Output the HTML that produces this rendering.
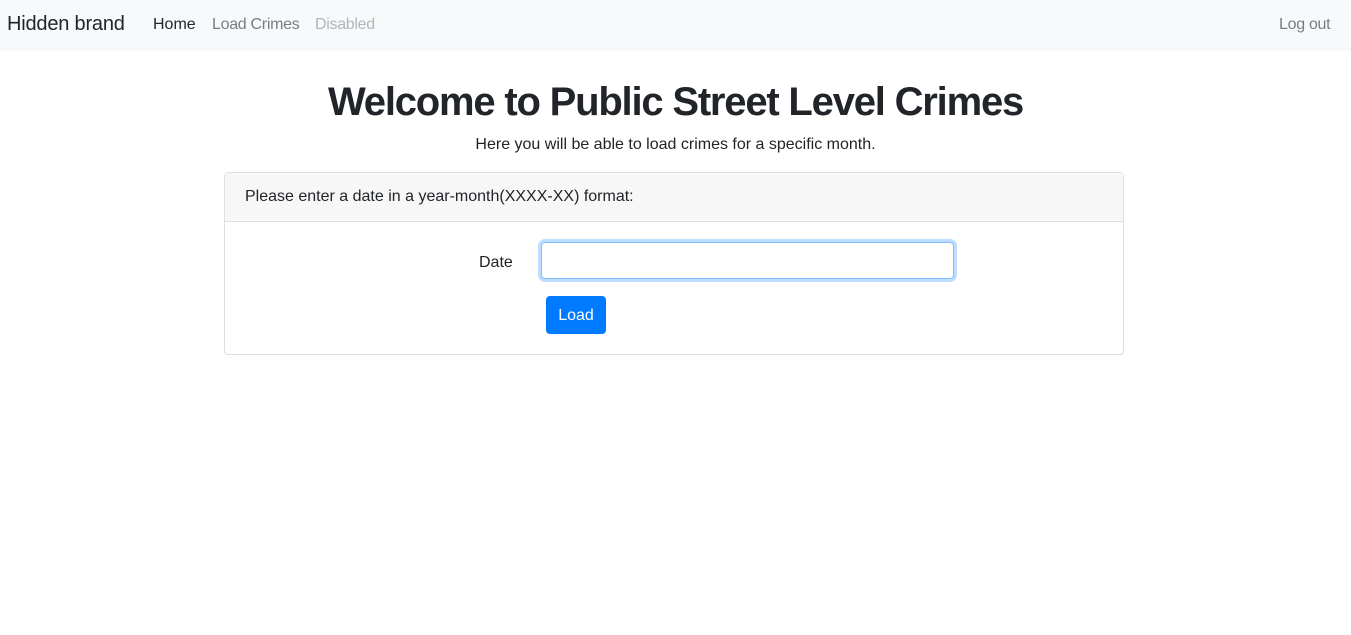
<!DOCTYPE html>
<html><head><meta charset="utf-8"><style>
body{margin:0;font-family:"Liberation Sans",sans-serif;color:#212529;background:#fff;width:1351px;height:635px;overflow:hidden}
nav{height:51px;background:#f8f9fa;position:relative}
nav span{position:absolute;top:16px;font-size:16px}
.brand{left:7px;top:13px!important;font-size:20px!important;color:#212529;letter-spacing:-0.2px}
.nl{letter-spacing:-0.3px}
h1{margin:0;position:absolute;top:80px;width:100%;text-align:center;font-size:40px;font-weight:bold;letter-spacing:-1.2px}
.sub{position:absolute;top:136px;width:100%;text-align:center;font-size:16px}
.card{position:absolute;left:224px;top:172px;width:898px;height:181px;border:1px solid #dfdfdf;border-radius:4px}
.hd{height:48px;background:#f7f7f7;border-bottom:1px solid #dfdfdf;font-size:16px;line-height:48px;padding-left:20px}
.lbl{position:absolute;left:254px;top:81px;font-size:16px}
.inp{position:absolute;left:316px;top:69px;width:411px;height:35px;border:1px solid #80bdff;border-radius:4px;box-shadow:0 0 0 3px rgba(0,123,255,.25)}
.btn{position:absolute;left:321px;top:123px;width:60px;height:38px;background:#007bff;color:#fff;border-radius:4px;font-size:16px;text-align:center;line-height:40px}
</style></head><body>
<nav><span class="brand">Hidden brand</span><span style="left:153px;color:#212529">Home</span><span class="nl" style="left:212px;color:#7a7e82">Load Crimes</span><span class="nl" style="left:315px;color:#b3b5b7">Disabled</span><span class="nl" style="left:1279px;color:#7a7e82">Log out</span></nav>
<h1>Welcome to Public Street Level Crimes</h1>
<div class="sub">Here you will be able to load crimes for a specific month.</div>
<div class="card"><div class="hd">Please enter a date in a year-month(XXXX-XX) format:</div>
<div class="lbl">Date</div><div class="inp"></div><div class="btn">Load</div></div>
</body></html>
